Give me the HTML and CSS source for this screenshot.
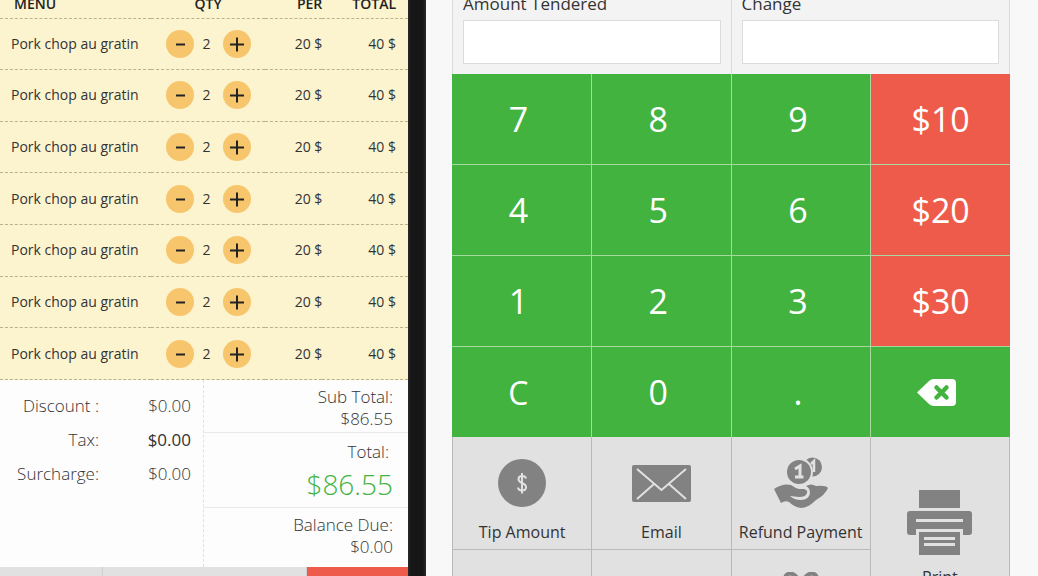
FILE: index.html
```html
<!DOCTYPE html>
<html lang="en">
<head>
    <meta charset="UTF-8">
    <meta name="viewport" content="width=device-width, initial-scale=1.0">
    <title>Payment</title>
    <link rel="stylesheet" href="styles.css">
</head>
<body>
    <div class="pos">
        <section class="order">
            <table class="items">
                <thead>
                    <tr>
                        <th class="col-menu">MENU</th>
                        <th class="col-qty">QTY</th>
                        <th class="col-per">PER</th>
                        <th class="col-total">TOTAL</th>
                    </tr>
                </thead>
                <tbody id="order-rows"></tbody>
            </table>

            <div class="summary">
                <dl class="charges">
                    <div class="charge"><dt>Discount :</dt><dd>$0.00</dd></div>
                    <div class="charge"><dt>Tax:</dt><dd class="strong">$0.00</dd></div>
                    <div class="charge"><dt>Surcharge:</dt><dd>$0.00</dd></div>
                </dl>
                <dl class="totals">
                    <div class="sub-total"><dt>Sub Total:</dt><dd>$86.55</dd></div>
                    <div class="grand-total"><dt>Total:</dt><dd>$86.55</dd></div>
                    <div class="balance"><dt>Balance Due:</dt><dd>$0.00</dd></div>
                </dl>
            </div>

            <div class="order-actions">
                <button type="button" class="hold-btn" aria-label="Hold"></button>
                <button type="button" class="save-btn" aria-label="Save"></button>
                <button type="button" class="cancel-btn" aria-label="Cancel"></button>
            </div>
        </section>

        <div class="bezel"></div>

        <main class="payment">
            <div class="amounts">
                <div class="field">
                    <label for="tendered">Amount Tendered</label>
                    <input type="text" id="tendered">
                </div>
                <div class="field">
                    <label for="change">Change</label>
                    <input type="text" id="change">
                </div>
            </div>

            <div class="keypad">
                <button type="button" class="key">7</button>
                <button type="button" class="key">8</button>
                <button type="button" class="key">9</button>
                <button type="button" class="key cash">$10</button>
                <button type="button" class="key">4</button>
                <button type="button" class="key">5</button>
                <button type="button" class="key">6</button>
                <button type="button" class="key cash">$20</button>
                <button type="button" class="key">1</button>
                <button type="button" class="key">2</button>
                <button type="button" class="key">3</button>
                <button type="button" class="key cash">$30</button>
                <button type="button" class="key clear">C</button>
                <button type="button" class="key">0</button>
                <button type="button" class="key">.</button>
                <button type="button" class="key erase" aria-label="Backspace">
                    <svg width="39" height="27" viewBox="0 0 39 27">
                        <path d="M0 13.5 12 2Q14 0 17 0H35Q39 0 39 4V23Q39 27 35 27H17Q14 27 12 25Z" fill="#fff"/>
                        <path d="M19.500 8.500 29.500 18.500M29.500 8.500 19.500 18.500" stroke="#43b340" stroke-width="4.500" stroke-linecap="round"/>
                    </svg>
                </button>
            </div>

            <div class="functions">
                <button type="button" class="tile">
                    <span class="icon">
                        <svg width="48" height="48" viewBox="0 0 48 48">
                            <circle cx="24" cy="24" r="24" fill="#828282"/>
                            <path d="M28 19.500Q27.500 17 24 17Q20.500 17 20.500 20Q20.500 22.500 24 24Q28 25.500 28 28.300Q28 31.500 24 31.500Q20.300 31.500 20 28.500M24 14V34.500" fill="none" stroke="#e1e1e1" stroke-width="2"/>
                        </svg>
                    </span>
                    <span class="tile-label">Tip Amount</span>
                </button>
                <button type="button" class="tile">
                    <span class="icon">
                        <svg width="59" height="37" viewBox="0 0 59 37">
                            <rect width="59" height="37" rx="2" fill="#828282"/>
                            <path d="M5 4 29.500 25 54 4M5 34 22 19M54 34 37 19" fill="none" stroke="#e1e1e1" stroke-width="2"/>
                        </svg>
                    </span>
                    <span class="tile-label">Email</span>
                </button>
                <button type="button" class="tile">
                    <span class="icon">
                        <svg width="54" height="52" viewBox="0 0 54 52">
                            <circle cx="38.500" cy="10" r="9.500" fill="#828282"/>
                            <path d="M37 7 40 4V15" fill="none" stroke="#e1e1e1" stroke-width="2.500"/>
                            <circle cx="25" cy="15" r="14" fill="#e1e1e1"/>
                            <circle cx="25" cy="15" r="12" fill="#828282"/>
                            <path d="M21 12 26 9V20M21 20H29.500" fill="none" stroke="#e1e1e1" stroke-width="3"/>
                            <path d="M0 32Q9 26 17 28Q21 31 25 32H30Q34 33 33 36Q32 40 25 40L16 39Q20 43 27 43Q35 43 36 36Q36 31 32 29Q37 26 42 29Q52 28 54 31Q51 38 42 43Q34 51 27 51Q20 50 15 45Q11 43 7 46Z" fill="#828282"/>
                        </svg>
                    </span>
                    <span class="tile-label">Refund Payment</span>
                </button>
                <button type="button" class="tile print">
                    <svg width="65" height="66" viewBox="0 0 65 66">
                        <path d="M12 0H53V18H12Z" fill="#828282"/>
                        <path d="M3 21H62Q65 21 65 24V42Q65 45 62 45H56V39H9V45H3Q0 45 0 42V24Q0 21 3 21Z" fill="#828282"/>
                        <path d="M9 30.500H56" stroke="#e1e1e1" stroke-width="3"/>
                        <path d="M12 42H53V65H12Z" fill="#828282"/>
                        <path d="M17 48.500H48M17 54.500H48" stroke="#e1e1e1" stroke-width="3"/>
                    </svg>
                    <span class="tile-label">Print</span>
                </button>
                <button type="button" class="tile" aria-label="Card">
                    <span class="icon">
                        <svg width="54" height="40" viewBox="0 0 54 40">
                            <rect width="54" height="40" rx="2" fill="#828282"/>
                        </svg>
                    </span>
                </button>
                <button type="button" class="tile" aria-label="No sale"></button>
                <button type="button" class="tile" aria-label="Gift">
                    <span class="icon gift">
                        <svg width="48" height="48" viewBox="0 0 48 48">
                            <path d="M24 14Q20 1.500 13 1.500Q7.500 2 8.500 8Q10 13 24 16Q38 13 39.500 8Q40.500 2 35 1.500Q28 1.500 24 14Z" fill="none" stroke="#828282" stroke-width="4"/>
                            <path d="M2 16H46V24H2ZM5 27H43V48H5Z" fill="#828282"/>
                        </svg>
                    </span>
                </button>
            </div>
        </main>
    </div>

    <script>
        const items = Array.from({ length: 7 }, () => ({
            name: "Pork chop au gratin",
            qty: 2,
            per: 20
        }));

        const rows = document.getElementById('order-rows');

        items.forEach(item => {
            const row = document.createElement('tr');
            row.innerHTML = `
                <td class="col-menu">${item.name}</td>
                <td class="col-qty">
                    <div class="stepper">
                        <button type="button" class="step" aria-label="Less">
                            <svg width="16" height="16" viewBox="0 0 16 16"><path d="M4 8.500H13"/></svg>
                        </button>
                        <span class="qty">${item.qty}</span>
                        <button type="button" class="step" aria-label="More">
                            <svg width="16" height="16" viewBox="0 0 16 16"><path d="M1 8.500H15M8 1.500V15.500"/></svg>
                        </button>
                    </div>
                </td>
                <td class="col-per">${item.per} $</td>
                <td class="col-total">${item.per * item.qty} $</td>
            `;
            rows.appendChild(row);
        });
    </script>
</body>
</html>
```
FILE: styles.css
```css
:root {
    --green: #43b340;
    --red: #ef5b4a;
    --cream: #fcf3cf;
    --amber: #f7c66c;
    --tile: #e1e1e1;
    --line: #b9b9b9;
    --text: #333;
}

* {
    box-sizing: border-box;
}

body {
    margin: 0;
    height: 100vh;
    overflow: hidden;
    background-color: #f8f8f8;
    color: var(--text);
    font-family: "Open Sans", "Noto Sans", sans-serif;
    font-size: 14px;
}

button {
    margin: 0;
    padding: 0;
    border: none;
    border-radius: 0;
    font: inherit;
    color: inherit;
    cursor: pointer;
}

svg {
    display: block;
}

dl,
dd {
    margin: 0;
}

/* The screen sits scrolled a little past its top edge */
.pos {
    display: grid;
    grid-template-columns: 2fr 18px 3fr;
    margin-top: -10px;
}

/* Order */
.order {
    background-color: #fdfdfd;
}

.items {
    width: 100%;
    height: 390px;
    table-layout: fixed;
    border-collapse: collapse;
    background-color: var(--cream);
}

.items thead tr {
    height: 28px;
}

.items tr {
    border-bottom: 1px dashed #bcb187;
}

.items th,
.items td {
    padding: 0;
    line-height: 20px;
}

.items th {
    color: #222;
    font-weight: 600;
    text-align: center;
}

.items .col-menu {
    width: 37%;
    padding-left: 11px;
    text-align: left;
    white-space: nowrap;
}

.items th.col-menu {
    padding-left: 14px;
}

.items .col-qty {
    width: 28%;
}

.items .col-per {
    width: 14%;
    text-align: right;
}

.items .col-total {
    padding-right: 12px;
    text-align: right;
}

.stepper {
    display: flex;
    justify-content: center;
    align-items: center;
}

.step {
    display: flex;
    justify-content: center;
    align-items: center;
    width: 28px;
    height: 28px;
    border-radius: 50%;
    background-color: var(--amber);
}

.step path {
    stroke: #222;
    stroke-width: 2;
}

.qty {
    width: 29px;
    padding-right: 3px;
    text-align: center;
}

/* Totals */
.summary {
    display: grid;
    grid-template-columns: 1fr 1fr;
    height: 187px;
    font-size: 17px;
    font-weight: 300;
}

.charges {
    display: flex;
    flex-direction: column;
    gap: 12px;
    padding: 15px 12px 0 16px;
    border-right: 1px dashed #e6e2cf;
}

.charge {
    display: flex;
    justify-content: space-between;
    line-height: 22px;
}

.charge dt {
    width: 86px;
    padding-right: 3px;
    text-align: right;
    white-space: nowrap;
}

.charge .strong {
    font-weight: 400;
}

.totals {
    text-align: right;
    line-height: 22px;
}

.totals > div {
    padding-right: 15px;
}

.sub-total {
    height: 53px;
    padding-top: 6px;
    border-bottom: 1px solid #e9e9e9;
}

.grand-total {
    height: 75px;
    padding-top: 8px;
    border-bottom: 1px solid #e9e9e9;
}

.grand-total dt {
    padding-right: 4px;
}

.grand-total dd {
    color: var(--green);
    font-size: 28px;
    line-height: 42px;
}

.balance {
    padding-top: 6px;
}

.order-actions {
    display: grid;
    grid-template-columns: 1fr 2fr 1fr;
    gap: 1px;
    height: 60px;
    background-color: #d0d0d0;
}

.hold-btn,
.save-btn {
    background-color: var(--tile);
}

.cancel-btn {
    background-color: var(--red);
}

.bezel {
    background: linear-gradient(to right, #2a2a2a, #161616 3px, #161616 15px, #2a2a2a);
}

/* Payment */
.payment {
    padding: 0 28px 0 26px;
}

.amounts {
    display: grid;
    grid-template-columns: 1fr 1fr;
    border-right: 1px solid #dcdcdc;
    background-color: #f3f3f3;
}

.field {
    padding: 4px 10px 10px;
    border-left: 1px solid #dcdcdc;
}

.field label {
    display: block;
    margin-bottom: 6px;
    font-size: 17px;
    line-height: 20px;
}

.field input {
    display: block;
    width: 100%;
    height: 44px;
    padding: 0 10px;
    border: 1px solid #dcdcdc;
    background-color: #fff;
    font: inherit;
    font-size: 17px;
}

.keypad {
    display: grid;
    grid-template-columns: repeat(4, 1fr);
    grid-auto-rows: 90px;
    gap: 1px;
    background-color: #a5d9a0;
}

.key {
    display: flex;
    justify-content: center;
    align-items: center;
    padding-right: 6px;
    background-color: var(--green);
    color: #fff;
    font-size: 34px;
}

.cash {
    padding-right: 0;
    background-color: var(--red);
}

.clear {
    font-size: 32px;
}

.erase {
    padding-right: 8px;
}

.functions {
    display: grid;
    grid-template-columns: repeat(4, 1fr);
    grid-auto-rows: 112px;
    gap: 1px;
    border: 1px solid var(--line);
    border-top: none;
    background-color: var(--line);
}

.tile {
    display: flex;
    flex-direction: column;
    align-items: center;
    padding-top: 18px;
    background-color: var(--tile);
}

.tile .icon {
    display: flex;
    align-items: center;
    height: 56px;
}

.tile-label {
    margin-top: 10px;
    font-size: 16px;
    line-height: 22px;
    white-space: nowrap;
}

.print {
    grid-column: 4;
    grid-row: 1 / 3;
    padding-top: 53px;
}
```
